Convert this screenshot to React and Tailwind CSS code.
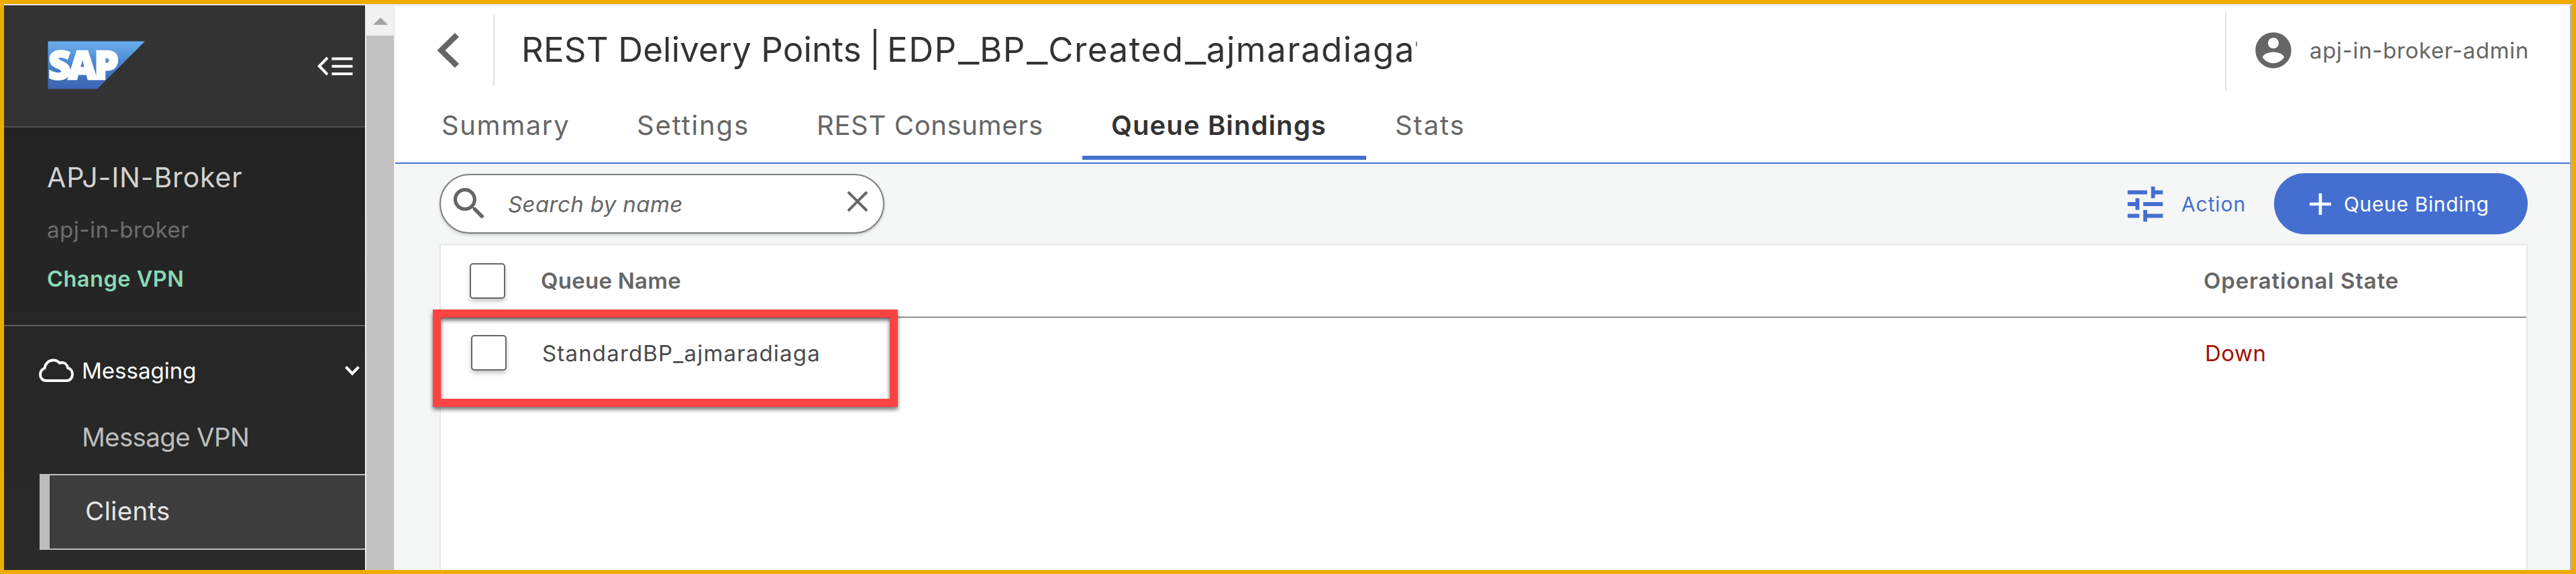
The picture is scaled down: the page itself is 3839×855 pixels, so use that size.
const TABS = [
  { label: "Summary", cls: "w-[291px] tracking-[1.6px]" },
  { label: "Settings", cls: "w-[268px] tracking-[1.85px]" },
  { label: "REST Consumers", cls: "w-[439px] tracking-[0.65px]" },
  { label: "Queue Bindings", cls: "w-[423px] tracking-[1.1px]", active: true },
  { label: "Stats", cls: "w-[200px] tracking-[1.9px]" },
];

function SapLogo() {
  return (
    <svg width="146" height="72" viewBox="0 0 146 72" className="block shrink-0 overflow-visible">
      <defs>
        <linearGradient id="sap" x1="0" y1="0" x2="0" y2="1">
          <stop offset="0" stopColor="#69aeee" />
          <stop offset="0.5" stopColor="#4a84cd" />
          <stop offset="0.8" stopColor="#406dba" />
          <stop offset="1" stopColor="#3c66b3" />
        </linearGradient>
      </defs>
      <path d="M0.5 0.5H145L74 71.500H0.500Z" fill="url(#sap)" />
      <text
        x="1"
        y="56.500"
        fontFamily="Open Sans, sans-serif"
        fontWeight="800"
        fontSize="58"
        fill="#fff"
        stroke="#fff"
        strokeWidth="2.500"
        textLength="105"
        lengthAdjust="spacing"
      >
        SAP
      </text>
    </svg>
  );
}

function CollapseIcon() {
  return (
    <svg width="53" height="30" viewBox="0 0 53 30" className="block" fill="none" stroke="#fff">
      <path d="M15 2L2.800 14.500L15 27" strokeWidth="4" />
      <path d="M21.500 3.500H52.500M21.500 14.700H52.500M21.500 26H52.500" strokeWidth="4" />
    </svg>
  );
}

function Checkbox() {
  return (
    <span className="block size-[53px] shrink-0 rounded-[5px] border-2 border-[#666666] bg-white shadow-[0_4px_6px_rgba(0,0,0,0.22)]" />
  );
}

function Sidebar() {
  return (
    <aside className="flex w-[538px] shrink-0 flex-col bg-linear-to-b from-[#212121] to-[#2a2a2a]">
      <div className="flex h-[182px] shrink-0 items-start justify-between border-b-2 border-[#505050] bg-[#333333] pt-[53px] pl-[65px] pr-[18px]">
        <SapLogo />
        <div className="pt-[23px]">
          <CollapseIcon />
        </div>
      </div>
      <div className="flex h-[296px] shrink-0 flex-col border-b-2 border-[#5f5f5f] pt-[44px] pl-[64px]">
        <div className="h-[60px] text-[41px] leading-[60px] tracking-[0.84px] text-[#d2d2d2]">APJ-IN-Broker</div>
        <div className="mt-6 h-12 text-[33px] leading-[48px] tracking-[0.52px] text-[#6e6e6e]">apj-in-broker</div>
        <div className="mt-[26px] h-12 text-[32.500px] font-semibold leading-[48px] tracking-[0.5px] text-[#8ad9b5]">Change VPN</div>
      </div>
      <nav className="flex flex-col">
        <div className="mt-[42px] flex h-12 items-center pl-[51px] pr-[7px] text-white">
          <svg width="53" height="36" viewBox="0 0 53 36" className="block shrink-0" fill="none" stroke="#fff" strokeWidth="4" strokeLinejoin="round">
            <path d="M11.500 33H42.500C47.500 33 51 28.500 51 23.500C51 18.500 48 15 44 14C43 9 39.500 6 35.500 6C34 6 33 6.300 32 7C29.500 4 26 2.500 22.500 2.500C16 2.500 10.500 7 9.500 14.500C5.500 16 3 19.500 3 24C3 29 6.500 33 11.500 33Z" />
          </svg>
          <span className="pl-[12px] text-[33px] leading-[48px]">Messaging</span>
          <svg width="24" height="16" viewBox="0 0 24 16" className="ml-auto block" fill="none" stroke="#fff" strokeWidth="4">
            <path d="M2.500 2.500L12 12.500L21.500 2.500" />
          </svg>
        </div>
        <div className="mt-[51px] h-12 pl-[116px] text-[38.500px] leading-[48px] tracking-[-0.66px] text-[#bdbdbd]">Message VPN</div>
        <div className="mt-[31px] ml-[53px] flex h-[113px] items-center border-y-2 border-l-[15px] border-[#bdbdbd] bg-[#3d3d3d] pb-px pl-[53px] text-[38.500px] tracking-[0.3px] text-[#e6e6e6]">
          Clients
        </div>
      </nav>
    </aside>
  );
}

function Scrollbar() {
  return (
    <div className="flex w-[45px] shrink-0 flex-col items-center bg-[#f1f1f1]">
      <div className="flex h-[45px] w-full shrink-0 justify-center pt-[18px]">
        <svg width="22" height="11" viewBox="0 0 22 11" className="block">
          <path d="M11 0L22 11H0Z" fill="#a3a3a3" />
        </svg>
      </div>
      <div className="w-[41px] grow bg-[#c1c1c1]" />
    </div>
  );
}

/* Widened underscore used inside object names */
function Underscore() {
  return <span className="mx-[5px] inline-block scale-x-135 tracking-normal">_</span>;
}

function PageHeader() {
  return (
    <header className="flex h-[236px] shrink-0 flex-col border-b-2 border-[#446fd1] bg-white">
      <div className="flex h-[134px] shrink-0 items-center">
        <svg width="34" height="52" viewBox="0 0 34 52" className="ml-[62px] block shrink-0">
          <path d="M27 0L33 6L12.500 26L33 46L27 52L0.500 26Z" fill="#666666" />
        </svg>
        <div className="ml-[50px] h-[106px] w-[2px] shrink-0 bg-[#e2e2e2]" />
        <h1 className="ml-[40px] flex w-[1333px] shrink-0 whitespace-nowrap pb-[2px] text-[51px] leading-[70px] text-[#333333]">
          <span className="w-[509px] tracking-[0.16px]">REST Delivery Points</span>
          <span className="w-[36px] text-center">|</span>
          <span className="tracking-[1.53px]">
            EDP
            <Underscore />
            BP
            <Underscore />
            Created
            <Underscore />
            ajmaradiaga
          </span>
        </h1>
        <div className="mb-[19px] h-[7px] w-[2px] shrink-0 bg-[#8a8a8a]" />
        <div className="ml-auto flex h-[117px] w-[514px] shrink-0 items-center border-l-2 border-[#e2e2e2] pl-[38px]">
          <svg width="64" height="64" viewBox="0 0 24 24" className="block shrink-0" fill="#666666">
            <path d="M12 2C6.480 2 2 6.480 2 12s4.480 10 10 10 10-4.480 10-10S17.520 2 12 2zm0 3c1.660 0 3 1.340 3 3s-1.340 3-3 3-3-1.340-3-3 1.340-3 3-3zm0 14.200c-2.500 0-4.710-1.280-6-3.220.030-1.990 4-3.080 6-3.080 1.990 0 5.970 1.090 6 3.080-1.290 1.940-3.500 3.220-6 3.220z" />
          </svg>
          <span className="ml-[22px] whitespace-nowrap text-[33px] leading-[48px] tracking-[0.65px] text-[#666666]">apj-in-broker-admin</span>
        </div>
      </div>
      <div className="flex pl-[26px]">
        {TABS.map((t) => (
          <div
            key={t.label}
            className={`h-[96px] whitespace-nowrap border-b-[6px] pt-[21px] pl-[43px] text-[40px] leading-[48px] ${t.cls} ${
              t.active ? "border-[#446fd1] font-semibold text-[#333333]" : "border-transparent text-[#666666]"
            }`}
          >
            {t.label}
          </div>
        ))}
      </div>
    </header>
  );
}

function Toolbar() {
  return (
    <div className="flex h-[119px] shrink-0 items-center justify-between">
      <div className="flex h-[89px] w-[663px] items-center rounded-full border-2 border-[#7f7f7f] bg-white pr-[22px] pl-[11px] shadow-[0_2px_4px_rgba(0,0,0,0.2)]">
        <svg width="63" height="63" viewBox="0 0 24 24" className="block shrink-0" fill="#666666">
          <path d="M15.500 14h-.790l-.280-.270C15.410 12.590 16 11.110 16 9.500 16 5.910 13.090 3 9.500 3S3 5.910 3 9.500 5.910 16 9.500 16c1.610 0 3.090-.590 4.230-1.570l.270.280v.790l5 4.990L20.490 19l-4.990-5zm-6 0C7.010 14 5 11.990 5 9.500S7.010 5 9.500 5 14 7.010 14 9.500 11.990 14 9.500 14z" />
        </svg>
        <span className="ml-[26px] text-[33px] italic leading-[48px] tracking-[0.4px] text-[#666666]">Search by name</span>
        <svg width="32" height="32" viewBox="0 0 32 32" className="mb-[7px] ml-auto block" fill="none" stroke="#666666" strokeWidth="4">
          <path d="M2 2L30 30M30 2L2 30" />
        </svg>
      </div>
      <div className="flex items-center">
        <svg width="70" height="70" viewBox="0 0 24 24" className="block" fill="#446fd1">
          <path d="M3 17v2h6v-2H3zM3 5v2h10V5H3zm10 16v-2h8v-2h-8v-2h-2v6h2zM7 9v2H3v2h4v2h2V9H7zm14 4v-2H11v2h10zm-6-4h2V7h4V5h-4V3h-2v6z" />
        </svg>
        <span className="ml-[19px] w-[138px] text-[30px] leading-[48px] tracking-[0.9px] text-[#446fd1]">Action</span>
        <div className="flex h-[91px] w-[378px] items-center rounded-full bg-[#446fd1] pl-[53px] text-white">
          <svg width="32" height="32" viewBox="0 0 32 32" className="block" fill="none" stroke="#fff" strokeWidth="4.500">
            <path d="M16 0V32M0 16H32" />
          </svg>
          <span className="ml-[19px] whitespace-nowrap text-[30px] leading-[48px] tracking-[0.64px]">Queue Binding</span>
        </div>
      </div>
    </div>
  );
}

function QueueTable() {
  return (
    <div className="relative flex grow flex-col border-2 border-b-0 border-[#e6e8e7] bg-white">
      <div className="flex h-[106px] shrink-0 items-center pl-[43px] text-[33px] font-semibold leading-[48px] text-[#666666]">
        <Checkbox />
        <span className="ml-[53px] tracking-[0.25px]">Queue Name</span>
        <span className="ml-auto w-[481px] tracking-[0.85px]">Operational State</span>
      </div>
      <div className="h-[3px] shrink-0 border-y border-[#cbcbcb] bg-[#808080]" />
      <div className="flex h-[103px] shrink-0 items-center pl-[45px] text-[33px] leading-[48px]">
        <Checkbox />
        <span className="ml-[53px] tracking-[1.17px] text-[#4a4a4a]">StandardBP_ajmaradiaga</span>
        <span className="ml-auto w-[479px] tracking-[0.5px] text-[#a81000]">Down</span>
      </div>
      <div className="absolute top-[96px] left-[-12px] h-[145px] w-[693px] border-[12px] border-[#fc4343] shadow-[0_4px_6px_rgba(0,0,0,0.55),inset_0_4px_6px_rgba(0,0,0,0.6)]" />
    </div>
  );
}

export default function App() {
  return (
    <div className="box-border flex h-[855px] w-[3839px] overflow-hidden border-6 border-[#f0ab00] bg-[#f5f7f6] font-['Inter','Liberation_Sans',sans-serif]">
      <div className="flex grow overflow-hidden border-t-2 border-[#e5e5e5]">
        <Sidebar />
        <Scrollbar />
        <main className="flex grow flex-col">
          <PageHeader />
          <div className="flex grow flex-col pr-[63px] pl-[66px]">
            <Toolbar />
            <QueueTable />
          </div>
        </main>
        <div className="w-[3px] shrink-0 bg-[#b0b0b0]" />
      </div>
    </div>
  );
}
